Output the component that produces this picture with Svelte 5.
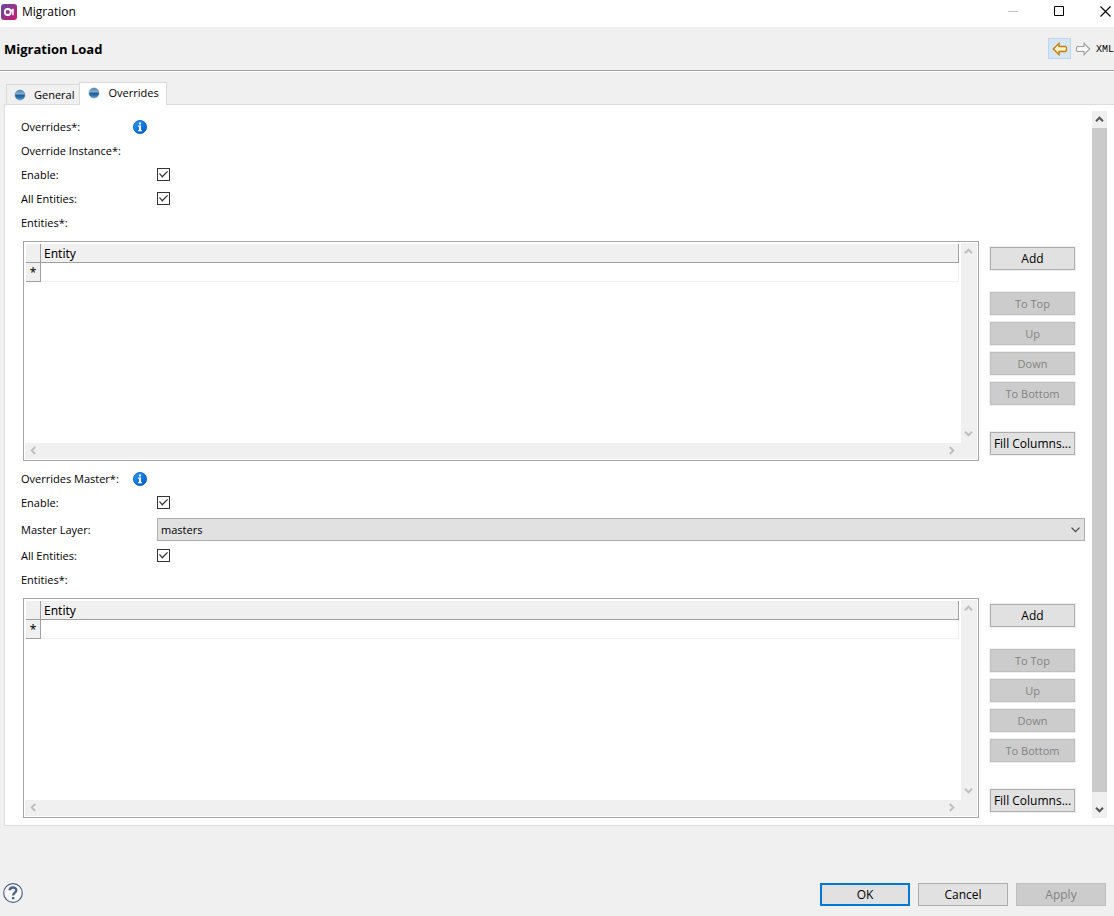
<script>
	let tabs = ["General", "Overrides"];
	let activeTab = "Overrides";
	let moveButtons = ["To Top", "Up", "Down", "To Bottom"];

	let enableOverrides = true;
	let allOverrides = true;
	let enableMaster = true;
	let allMaster = true;
	let masterLayer = "masters";
</script>

<svelte:head>
	<title>Migration</title>
</svelte:head>

{#snippet arrow(dir)}
	<svg class="arrow {dir}" width="9" height="9" viewBox="0 0 9 9">
		<path d="M1 6.2 L4.5 2.7 L8 6.2" fill="none" stroke="currentColor" stroke-width="2" />
	</svg>
{/snippet}

{#snippet dot()}
	<svg class="dot" width="12" height="12" viewBox="0 0 12 12">
		<circle cx="6" cy="6" r="5" fill="url(#dotFill)" stroke="#5d8db5" stroke-width="0.6" />
	</svg>
{/snippet}

{#snippet info()}
	<svg class="info" width="14" height="14" viewBox="0 0 14 14">
		<circle cx="7" cy="7" r="6.6" fill="url(#infoFill)" stroke="#0a5cb8" stroke-width="0.8" />
		<path d="M6 2.5h2v2H6zM5 5.5h3v4.5h1v1.2H5V10h1V6.7H5z" fill="#fff" />
	</svg>
{/snippet}

{#snippet entities()}
	<div class="entities">
		<div class="grid">
			<div class="view">
				<table>
					<thead>
						<tr><th class="marker"></th><th>Entity</th></tr>
					</thead>
					<tbody>
						<tr><td class="marker">*</td><td></td></tr>
					</tbody>
				</table>
			</div>
			<div class="bar vertical">{@render arrow("up")}{@render arrow("down")}</div>
			<div class="bar horizontal">{@render arrow("left")}{@render arrow("right")}</div>
		</div>
		<div class="actions">
			<button>Add</button>
			<div class="moves">
				{#each moveButtons as name}
					<button disabled>{name}</button>
				{/each}
			</div>
			<button>Fill Columns...</button>
		</div>
	</div>
{/snippet}

<div class="window">
	<header class="titlebar">
		<svg width="16" height="16" viewBox="0 0 16 16">
			<defs>
				<linearGradient id="logoFill" x1="0" y1="0" x2="1" y2="1">
					<stop offset="0" stop-color="#654a9e" />
					<stop offset="0.5" stop-color="#93358c" />
					<stop offset="1" stop-color="#d4146f" />
				</linearGradient>
				<linearGradient id="dotFill" x1="0" y1="0" x2="0" y2="1">
					<stop offset="0" stop-color="#4a7fae" />
					<stop offset="0.4" stop-color="#8fb3d2" />
					<stop offset="0.5" stop-color="#1d5b93" />
					<stop offset="0.7" stop-color="#2a6ca6" />
					<stop offset="1" stop-color="#58a0d6" />
				</linearGradient>
				<linearGradient id="infoFill" x1="0" y1="0" x2="1" y2="1">
					<stop offset="0" stop-color="#35a0f5" />
					<stop offset="0.5" stop-color="#0b7be6" />
					<stop offset="1" stop-color="#0758c0" />
				</linearGradient>
				<linearGradient id="backFill" x1="0" y1="0" x2="0" y2="1">
					<stop offset="0" stop-color="#fffdf0" />
					<stop offset="1" stop-color="#ffe9a0" />
				</linearGradient>
			</defs>
			<rect width="16" height="16" rx="3" fill="url(#logoFill)" />
			<circle cx="6.8" cy="8" r="3" fill="none" stroke="#fff" stroke-width="1.8" />
			<path d="M9.4 5.2 L11 7.4 M12 4.8 V11.2" fill="none" stroke="#fff" stroke-width="1.5" />
		</svg>
		<span class="caption">Migration</span>
		<div class="controls">
			<button aria-label="Minimize" disabled>
				<svg width="11" height="11" viewBox="0 0 11 11"><path d="M0 5.5h10" stroke="#c4c4c4" /></svg>
			</button>
			<button aria-label="Maximize">
				<svg width="11" height="11" viewBox="0 0 11 11"><path d="M.5 .5h9v9h-9z" fill="none" stroke="#000" /></svg>
			</button>
			<button aria-label="Close">
				<svg width="11" height="11" viewBox="0 0 11 11"><path d="M.5 .5l10 10M10.5 .5l-10 10" stroke="#000" stroke-width="1.1" /></svg>
			</button>
		</div>
	</header>

	<div class="heading">
		<h1>Migration Load</h1>
		<div class="tools">
			<button class="back" aria-label="Back">
				<svg width="16" height="14" viewBox="0 0 16 14">
					<path d="M1.3 7 L7 1.3 V4.5 H13.5 L14.5 5.5 V8.5 L13.5 9.5 H7 V12.7 Z" fill="url(#backFill)" stroke="#c27c0e" stroke-width="1.3" />
				</svg>
			</button>
			<button class="forward" aria-label="Forward">
				<svg width="16" height="14" viewBox="0 0 16 14">
					<path d="M14.7 7 L9 1.3 V4.5 H2.5 L1.5 5.5 V8.5 L2.5 9.5 H9 V12.7 Z" fill="#f8f8f8" stroke="#a0a0a0" stroke-width="1.1" />
				</svg>
			</button>
			<button class="xml">XML</button>
		</div>
	</div>

	<nav class="tabs">
		{#each tabs as tab}
			<button class:active={tab === activeTab} on:click={() => (activeTab = tab)}>
				{@render dot()}{tab}
			</button>
		{/each}
	</nav>

	<main class="panel">
		<form>
			<div class="row"><span class="label">Overrides*:</span>{@render info()}</div>
			<div class="row"><span class="label">Override Instance*:</span></div>
			<div class="row">
				<label for="enable">Enable:</label>
				<input id="enable" type="checkbox" bind:checked={enableOverrides} />
			</div>
			<div class="row">
				<label for="all">All Entities:</label>
				<input id="all" type="checkbox" bind:checked={allOverrides} />
			</div>
			<div class="row"><span class="label">Entities*:</span></div>
			{@render entities()}

			<div class="row"><span class="label">Overrides Master*:</span>{@render info()}</div>
			<div class="row">
				<label for="enableMaster">Enable:</label>
				<input id="enableMaster" type="checkbox" bind:checked={enableMaster} />
			</div>
			<div class="row tall">
				<label for="layer">Master Layer:</label>
				<div class="combo">
					<select id="layer" bind:value={masterLayer}>
						<option value="masters">masters</option>
					</select>
					<svg width="9" height="6" viewBox="0 0 9 6"><path d="M.5 .7 L4.5 4.7 L8.5 .7" fill="none" stroke="#444" stroke-width="1.2" /></svg>
				</div>
			</div>
			<div class="row">
				<label for="allMaster">All Entities:</label>
				<input id="allMaster" type="checkbox" bind:checked={allMaster} />
			</div>
			<div class="row"><span class="label">Entities*:</span></div>
			{@render entities()}
		</form>
		<div class="pagebar">
			{@render arrow("up")}
			<div class="thumb"></div>
			{@render arrow("down")}
		</div>
	</main>

	<footer>
		<button class="help" aria-label="Help">
			<svg width="20" height="20" viewBox="0 0 20 20">
				<circle cx="10" cy="10" r="9.3" fill="#f8f8f8" stroke="#4e628e" stroke-width="1.2" />
				<path d="M6.6 7.2 C6.8 3.6 13.3 3.5 13.3 7.2 C13.3 9.6 10.1 9.6 10.1 12.6" fill="none" stroke="#4e628e" stroke-width="2.4" />
				<path d="M8.9 14h2.4v2.2H8.9z" fill="#4e628e" />
			</svg>
		</button>
		<button class="ok">OK</button>
		<button>Cancel</button>
		<button disabled>Apply</button>
	</footer>
</div>

<style>
	:global(body) {
		background: #f0f0f0;
	}
	.window {
		display: flex;
		flex-direction: column;
		min-height: 100vh;
		overflow: hidden;
		color: #000;
		font: 12px/16px "Segoe UI", "Open Sans", sans-serif;
	}
	button, select {
		font: inherit;
		color: inherit;
		margin: 0;
		padding: 0;
		box-sizing: border-box;
	}
	button {
		height: 23px;
		border: 1px solid #adadad;
		background: #e1e1e1;
		white-space: nowrap;
	}
	button:disabled {
		color: #838383;
		border-color: #bfbfbf;
		background: #cccccc;
	}
	svg {
		display: block;
		flex: none;
	}

	.titlebar {
		display: flex;
		align-items: center;
		height: 27px;
		padding: 0 0 4px 1px;
		box-sizing: border-box;
		background: #fff;
	}
	.caption {
		flex: 1;
		margin-left: 5px;
	}
	.controls {
		display: flex;
		gap: 35px;
		padding-right: 3px;
	}
	.controls button {
		width: 11px;
		height: 11px;
		border: 0;
		background: none;
	}

	.heading {
		display: flex;
		align-items: center;
		justify-content: space-between;
		height: 43px;
		padding-left: 4px;
		border-bottom: 1px solid #a0a0a0;
		box-shadow: 0 1px #fff;
	}
	h1 {
		margin: 0;
		font-size: 13px;
		font-weight: bold;
	}
	.tools {
		display: flex;
		align-items: center;
	}
	.tools button {
		display: flex;
		align-items: center;
		justify-content: center;
		width: 23px;
		height: 21px;
		border: 0;
		background: none;
	}
	.tools .back {
		border: 1px solid #b5d8f5;
		background: #d8e6f2;
	}
	.tools .xml {
		width: 20px;
		padding-top: 2px;
		font: 10px/12px "Liberation Mono", monospace;
		justify-content: flex-end;
	}

	.tabs {
		display: flex;
		align-items: flex-end;
		height: 33px;
		padding-left: 6px;
		font-size: 11px;
	}
	.tabs button {
		display: flex;
		align-items: center;
		gap: 8px;
		height: 20px;
		padding: 0 5px 0 7px;
		border: 1px solid #d9d9d9;
		border-width: 1px 0 0 1px;
		background: #f0f0f0;
	}
	.tabs .active {
		z-index: 1;
		height: 23px;
		padding: 0 7px 2px 8px;
		border-width: 1px 1px 0 1px;
		margin-bottom: -1px;
		background: #fff;
	}

	.panel {
		display: flex;
		gap: 7px;
		margin-left: 4px;
		padding: 6px 7px 7px 0;
		border: 1px solid #dcdcdc;
		border-right: 0;
		background: #fff;
	}
	form {
		flex: 1;
		min-width: 0;
		padding: 4px 0 0 16px;
	}
	.row {
		display: flex;
		align-items: center;
		height: 24px;
		font-size: 11px;
	}
	.tall {
		height: 29px;
	}
	.row label {
		width: 136px;
	}
	.row .label {
		width: 112px;
		white-space: nowrap;
	}
	input {
		appearance: none;
		width: 13px;
		height: 13px;
		margin: 0 0 1px;
		padding: 2px 1px;
		border: 1px solid #333;
		box-sizing: border-box;
		background: #fff;
	}
	input:checked::before {
		content: "";
		display: block;
		width: 9px;
		height: 7px;
		background: #333;
		clip-path: polygon(0 40%, 10% 30%, 36% 68%, 90% 0, 100% 12%, 36% 98%);
	}
	.combo {
		display: grid;
		flex: 1;
		align-items: center;
	}
	.combo select, .combo svg {
		grid-area: 1 / 1;
	}
	.combo svg {
		justify-self: end;
		margin-right: 5px;
		pointer-events: none;
	}
	select {
		appearance: none;
		width: 100%;
		height: 23px;
		padding-left: 3px;
		border: 1px solid #adadad;
		border-radius: 0;
		background: #e1e1e1;
	}

	.entities {
		display: flex;
		margin: 6px 10px 6px 2px;
	}
	.entities:last-child {
		margin-bottom: 0;
	}
	.grid {
		display: grid;
		grid-template: 200px 16px / 1fr 16px;
		flex: 1;
		padding: 1px;
		border: 1px solid #a5a5a9;
	}
	.view {
		padding: 1px 2px 0 1px;
	}
	table {
		width: 100%;
		border-collapse: separate;
		border-spacing: 0;
		table-layout: fixed;
	}
	th, td {
		height: 19px;
		padding: 2px 3px 0;
		box-sizing: border-box;
		text-align: left;
		font: 12px/16px "Noto Sans", sans-serif;
		border: solid #f0f0f0;
		border-width: 0 1px 1px 0;
	}
	th {
		background: #f0f0f0;
		border-color: #a0a0a0;
	}
	.marker {
		width: 15px;
		padding: 2px 0 0;
		text-align: center;
		background: #f0f0f0;
		border-color: #a0a0a0;
	}
	.bar {
		display: flex;
		align-items: center;
		justify-content: space-between;
		color: #bfbfbf;
		background: #f0f0f0;
	}
	.vertical {
		flex-direction: column;
		padding: 4px 1px 5px 0;
	}
	.horizontal {
		grid-column: 1 / 3;
		padding: 0 21px 1px 4px;
	}
	.down {
		transform: rotate(180deg);
	}
	.left {
		transform: rotate(-90deg);
	}
	.right {
		transform: rotate(90deg);
	}
	.actions {
		display: flex;
		flex-direction: column;
		width: 85px;
		margin: 6px 0 0 11px;
	}
	.actions button {
		outline: 1px solid #f0f0f0;
	}
	.moves {
		display: flex;
		flex-direction: column;
		gap: 7px;
		margin: 22px 0 27px;
		font-size: 11px;
	}
	.pagebar {
		display: flex;
		flex-direction: column;
		align-items: center;
		gap: 4px;
		width: 15px;
		padding: 4px 0;
		color: #555;
		background: #f0f0f0;
	}
	.thumb {
		flex: 1;
		width: 100%;
		margin-bottom: 9px;
		background: #cacaca;
	}

	footer {
		display: flex;
		gap: 8px;
		margin-top: auto;
		padding: 20px 8px 10px 3px;
	}
	footer button {
		width: 90px;
	}
	footer .ok {
		border: 2px solid #0078d7;
	}
	footer .help {
		width: 20px;
		height: 20px;
		margin-right: auto;
		border: 0;
		background: none;
	}
</style>
